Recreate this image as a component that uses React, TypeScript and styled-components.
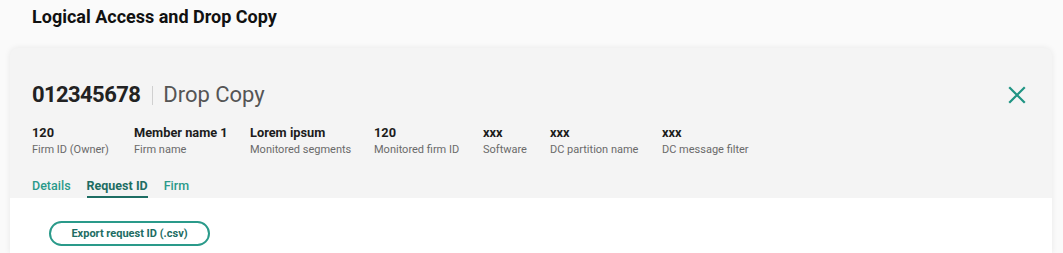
import React from "react";
import styled, { createGlobalStyle } from "styled-components";

const Global = createGlobalStyle`
  html, body { margin: 0; padding: 0; background: #fafafa; }
  body { font-family: Roboto, "Liberation Sans", sans-serif; overflow: hidden; }
`;

const Page = styled.div`
  padding: 6px 11px 0 10px;
  height: 253px;
  box-sizing: border-box;
  overflow: hidden;
`;

const Title = styled.h1`
  margin: 0 0 0 22px;
  font-size: 18px;
  line-height: 22px;
  font-weight: 700;
  color: #111;
  letter-spacing: 0;
`;

const Card = styled.div`
  margin-top: 20px;
  background: #f4f4f4;
  border-radius: 8px 8px 0 0;
  box-shadow: 0 0 6px rgba(0, 0, 0, 0.08);
  overflow: hidden;
`;

const Header = styled.div`
  padding: 33px 22px 0 22px;
`;

const TopRow = styled.div`
  display: flex;
  align-items: center;
  justify-content: space-between;
`;

const Heading = styled.div`
  display: flex;
  align-items: center;
  font-size: 22px;
  line-height: 28px;
`;

const Id = styled.span`
  font-weight: 700;
  color: #222;
  letter-spacing: -0.6px;
`;

const Sep = styled.span`
  width: 1px;
  height: 19px;
  background: #d0d0d0;
  margin: 0 10px 0 12px;
`;

const Sub = styled.span`
  font-weight: 400;
  color: #555;
`;

const Close = styled.button`
  border: none;
  background: none;
  padding: 0;
  margin-right: 4px;
  display: flex;
  cursor: pointer;
`;

const Fields = styled.div`
  display: flex;
  margin-top: 16px;
`;

const Field = styled.div<{ $w: number }>`
  width: ${(p) => p.$w}px;
  display: flex;
  flex-direction: column;
`;

const Value = styled.span`
  font-size: 12.8px;
  line-height: 15px;
  font-weight: 700;
  color: #1c1c1c;
`;

const Label = styled.span`
  font-size: 11px;
  line-height: 14px;
  color: #6a6a6a;
  margin-top: 3px;
`;

const Tabs = styled.div`
  display: flex;
  gap: 16px;
  margin-top: 21px;
`;

const Tab = styled.span<{ $active?: boolean }>`
  font-size: 12.5px;
  line-height: 16px;
  font-weight: ${(p) => (p.$active ? 700 : 500)};
  color: ${(p) => (p.$active ? "#1d6d63" : "#2a9a8a")};
  padding: 0 0 2px;
  border-bottom: 2px solid ${(p) => (p.$active ? "#1d6d63" : "transparent")};
`;

const Body = styled.div`
  background: #fff;
  padding: 23px 39px 7px;
`;

const Button = styled.button`
  display: block;
  font-family: inherit;
  font-size: 11px;
  font-weight: 700;
  color: #1d6d63;
  background: #fff;
  border: 2px solid #2a9a8a;
  border-radius: 13px;
  width: 161px;
  height: 25px;
  cursor: pointer;
`;

const fields = [
  { v: "120", l: "Firm ID (Owner)", w: 102 },
  { v: "Member name 1", l: "Firm name", w: 116 },
  { v: "Lorem ipsum", l: "Monitored segments", w: 124 },
  { v: "120", l: "Monitored firm ID", w: 109 },
  { v: "xxx", l: "Software", w: 67 },
  { v: "xxx", l: "DC partition name", w: 112 },
  { v: "xxx", l: "DC message filter", w: 120 },
];

export default function App() {
  return (
    <>
      <Global />
      <Page>
        <Title>Logical Access and Drop Copy</Title>
        <Card>
          <Header>
            <TopRow>
              <Heading>
                <Id>012345678</Id>
                <Sep />
                <Sub>Drop Copy</Sub>
              </Heading>
              <Close aria-label="Close">
                <svg width="18" height="18" viewBox="0 0 18 18">
                  <path d="M2 2 L16 16 M16 2 L2 16" stroke="#1f9483" strokeWidth="2.2" strokeLinecap="square" />
                </svg>
              </Close>
            </TopRow>
            <Fields>
              {fields.map((f, i) => (
                <Field key={i} $w={f.w}>
                  <Value>{f.v}</Value>
                  <Label>{f.l}</Label>
                </Field>
              ))}
            </Fields>
            <Tabs>
              <Tab>Details</Tab>
              <Tab $active>Request ID</Tab>
              <Tab>Firm</Tab>
            </Tabs>
          </Header>
          <Body>
            <Button>Export request ID (.csv)</Button>
          </Body>
        </Card>
      </Page>
    </>
  );
}
